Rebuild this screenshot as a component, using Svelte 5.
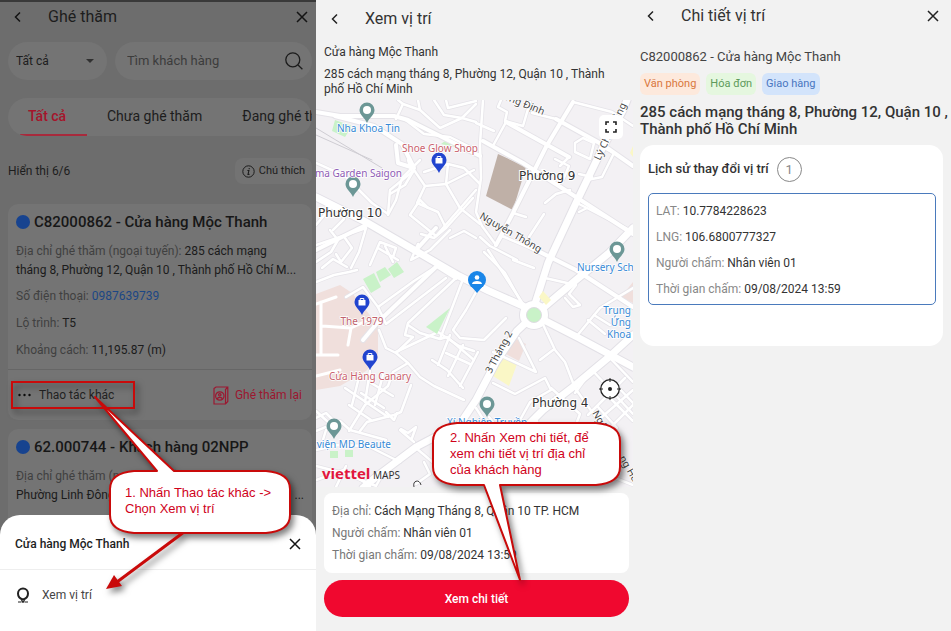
<script>
  const visitDetails = [
    { label: 'Số điện thoại', value: '0987639739', phone: true },
    { label: 'Lộ trình', value: 'T5' },
    { label: 'Khoảng cách', value: '11,195.87 (m)' }
  ];
  const placement = [
    { label: 'Địa chỉ', value: 'Cách Mạng Tháng 8, Quận 10 TP. HCM' },
    { label: 'Người chấm', value: 'Nhân viên 01' },
    { label: 'Thời gian chấm', value: '09/08/2024 13:59' }
  ];
  const history = [
    { label: 'LAT', value: '10.7784228623' },
    { label: 'LNG', value: '106.6800777327' },
    { label: 'Người chấm', value: 'Nhân viên 01' },
    { label: 'Thời gian chấm', value: '09/08/2024 13:59' }
  ];

  const lanes = [
    'M316 163L345 176L372 203', 'M316 245L340 237L366 228', 'M366 228L359 252L351 268', 'M316 262L331 252L338 240L330 230',
    'M316 282L334 275L349 272L357 270', 'M333 230L344 219L341 208', 'M345 238L352 248L341 262L336 254', 'M322 268L333 259L347 267',
    'M316 225L327 212L333 205', 'M372 203L388 214L390 190L412 172L408 160', 'M388 215L396 200L402 178L420 160',
    'M403 118L424 134L450 137L476 150', 'M396 119L403 104L398 100', 'M403 104L420 110L418 100', 'M420 110L440 128L462 118L476 122',
    'M434 100L444 115L462 118L476 104', 'M446 100L448 108L476 101', 'M414 170L425 186L417 203L438 212L446 228L434 238L421 234',
    'M414 170L405 185L390 194', 'M424 172L448 164L464 168L480 184', 'M448 164L446 184L460 208L480 224', 'M425 186L446 184L474 170',
    'M410 215L436 236L476 190', 'M410 215L420 200L428 208', 'M446 228L473 198', 'M450 238L464 231L476 238', 'M418 244L411 260L430 250L450 230',
    'M370 265L380 242L396 248L393 257M378 248L398 260M385 246L393 262', 'M437 266L414 281L378 307L386 324L446 278', 'M378 307L363 287L346 297',
    'M456 278L408 323L405 335L413 337', 'M408 325L420 333L440 339L452 308L463 279', 'M476 292L466 310L453 330L460 338L484 340L506 318',
    'M413 337L396 353L386 348L379 330', 'M396 353L408 363L420 377L434 386L464 400', 'M396 352L438 332L459 346L474 351',
    'M440 339L447 337L474 360', 'M432 360L447 370L463 388', 'M450 335L438 365M463 345L448 376M478 352L460 386M446 353L470 364',
    'M408 363L393 372L388 386L365 405L349 431', 'M371 383L393 396M361 393L384 408M349 405L371 420M358 381L352 405M370 371L365 402M383 375L375 405M345 388L388 417',
    'M316 431L340 421L350 430L386 440', 'M316 450L338 445L368 446L400 462', 'M360 431L367 422L394 415L401 412L411 385', 'M386 412L394 420L397 413',
    'M401 429L408 433L416 427L412 438M400 430L414 442', 'M316 411L328 422M316 418L326 413L334 421', 'M322 443L326 430', 'M356 478L376 486L386 468',
    'M316 466L355 476L370 486M316 480L344 470M336 487L346 466', 'M416 448L442 470L460 460', 'M424 462L430 474L416 484',
    'M483 100L480 144L481 178L476 212L482 226L496 245', 'M476 123L494 131', 'M501 100L498 107L507 112L505 121L523 126L530 102',
    'M506 122L569 157L560 166M555 159L569 166L563 180', 'M506 122L494 144', 'M556 119L532 113', 'M575 143L583 138L594 143L590 159L575 152Z',
    'M573 102L612 112L633 126', 'M579 174L592 177M587 180L602 177L614 153L602 147', 'M545 203L556 194L570 190', 'M544 214L529 237',
    'M513 213L526 217', 'M496 245L502 236L530 248L552 258', 'M480 237L490 246L517 260', 'M484 252L505 273L520 300', 'M513 260L534 268',
    'M488 250L523 304', 'M575 202L587 208L579 212M587 208L633 232', 'M545 278L576 285L569 294L580 305L573 307L565 298',
    'M540 318L555 350L565 362L575 388L612 440', 'M540 360L553 350', 'M519 338L536 372L493 352', 'M493 383L515 394L545 378L551 390L530 402L520 420',
    'M576 337L600 308L633 288', 'M588 320L605 334M594 315L610 325', 'M575 393L592 370L609 357L633 382', 'M592 370L633 414',
    'M588 415L625 378M595 423L633 390M604 434L633 405M598 407L617 428M608 396L633 421M617 386L633 403', 'M545 408L522 434L502 440L478 421',
    'M489 417L510 443L545 456', 'M551 388L580 414L570 440L595 470L633 485', 'M560 399L535 415L541 434', 'M476 408L490 430L474 450'
  ];
  const streets = [
    'M316 112L340 116L394 116L408 120L470 151L480 156', 'M335 116L374 126L402 144L414 168L398 163L396 145', 'M316 250L366 225',
    'M483 141L523 163L576 197L633 234', 'M506 122L569 157', 'M573 102L546 147L513 213L496 245', 'M556 119L603 145L633 166', 'M530 247L576 270L633 307',
    'M416 250L436 228', 'M437 266L456 278', 'M363 340L378 322L437 266'
  ];
  const avenues = [
    'M316 197L366 222L416 251L459 276L489 291L523 306L534 315L579 338L633 367', 'M627 100L623 110L603 147L576 203L548 263L534 307',
    'M534 315L517 331L496 362L476 400L460 424L416 447L376 477L363 488', 'M537 313L576 280L609 253L633 228', 'M633 335L609 357L573 387L543 410L510 443'
  ];
  const places = [
    { x: 367, y: 123 }, { x: 353, y: 197 }, { x: 617, y: 262 }, { x: 487, y: 417 }, { x: 334, y: 439 }
  ];
  const shops = [{ x: 439, y: 173 }, { x: 362, y: 315 }, { x: 370, y: 370 }];
</script>

{#snippet back()}
  <svg width="12" height="14" viewBox="0 0 12 14"><path d="M8 2.5L3.5 7L8 11.5" fill="none" stroke="currentColor" stroke-width="1.5" /></svg>
{/snippet}
{#snippet cross()}
  <svg width="12" height="12" viewBox="0 0 12 12"><path d="M1 1L11 11M11 1L1 11" fill="none" stroke="currentColor" stroke-width="1.5" /></svg>
{/snippet}

<main>
  <section class="panel visits">
    <header>
      <button class="icon" aria-label="Quay lại">{@render back()}</button>
      <h1>Ghé thăm</h1>
      <button class="icon" aria-label="Đóng">{@render cross()}</button>
    </header>

    <div class="filters">
      <div class="pill choose">
        <select aria-label="Trạng thái"><option>Tất cả</option></select>
        <svg width="8" height="4" viewBox="0 0 8 4"><path d="M0 0H8L4 4Z" fill="#303030" /></svg>
      </div>
      <div class="pill search">
        <input type="search" placeholder="Tìm khách hàng" aria-label="Tìm khách hàng" />
        <svg width="18" height="18" viewBox="0 0 18 18" fill="none" stroke="#1c1c1c" stroke-width="1.3"><circle cx="7.8" cy="7.8" r="7" /><path d="M13 13L17.4 17.2" /></svg>
      </div>
    </div>

    <div class="tabs" role="tablist">
      <button role="tab" aria-selected="true" class="on">Tất cả</button>
      <button role="tab" aria-selected="false">Chưa ghé thăm</button>
      <button role="tab" aria-selected="false">Đang ghé thăm</button>
    </div>

    <div class="count">
      <span>Hiển thị 6/6</span>
      <button>
        <svg width="13" height="13" viewBox="0 0 13 13"><circle cx="6.5" cy="6.5" r="5.7" fill="none" stroke="#1c1c1c" /><path d="M7.2 3V4.3M5.4 5.5H6.9L6 9.4H7.5" fill="none" stroke="#1c1c1c" stroke-width="1.1" /></svg>
        Chú thích
      </button>
    </div>

    <article class="visit">
      <h2><i></i>C82000862 - Cửa hàng Mộc Thanh</h2>
      <p class="address">Địa chỉ ghé thăm (ngoại tuyến): <b>285 cách mạng<br />tháng 8, Phường 12, Quận 10 , Thành phố Hồ Chí M...</b></p>
      {#each visitDetails as d}
        <p>{d.label}: {#if d.phone}<a href="tel:{d.value}">{d.value}</a>{:else}<b>{d.value}</b>{/if}</p>
      {/each}
      <footer>
        <button class="more">
          <svg width="13" height="4" viewBox="0 0 13 4"><circle cx="1.5" cy="2" r="1.2" /><circle cx="6.5" cy="2" r="1.2" /><circle cx="11.5" cy="2" r="1.2" /></svg>
          Thao tác khác
        </button>
        <button class="again">
          <svg width="16" height="19" viewBox="0 0 16 19" fill="none" stroke="currentColor" stroke-width="1.2"><path d="M1 2.5L3 1H14.800V15.500L12.500 18H1Z M12.500 18V3.500L14.800 1" /><circle cx="6.800" cy="10" r="4.200" /><circle cx="6.800" cy="8.800" r="1.2" /><path d="M4.500 13C4.500 10.800 9.100 10.800 9.100 13" /></svg>
          Ghé thăm lại
        </button>
      </footer>
    </article>

    <article class="visit">
      <h2><i></i>62.000744 - Khách hàng 02NPP</h2>
      <p class="address">Địa chỉ ghé thăm (ngoại tuyến):<br /><b class="cut"><span>Phường Linh Đông</span><span>...</span></b></p>
    </article>

    <div class="sheet">
      <div class="sheet-head">
        <h2>Cửa hàng Mộc Thanh</h2>
        <button class="icon" aria-label="Đóng">{@render cross()}</button>
      </div>
      <button class="option">
        <svg width="14" height="16" viewBox="0 0 14 16" fill="none" stroke="#222" stroke-width="2"><path d="M7 12.500C3.500 11.500 2 9 2 6.500A5 5 0 0 1 12 6.500C12 9 10.500 11.500 7 12.500Z" /><path d="M2 15H5.500M8.500 15H12M5.500 13L7 15.500L8.500 13" stroke-width="1.200" /></svg>
        Xem vị trí
      </button>
    </div>

    <svg class="marks" width="316" height="631" viewBox="0 0 316 631">
      <g class="shade" fill="none" stroke="#c90a0a" stroke-width="2">
        <rect x="12" y="382" width="122" height="26" />
        <path d="M184 532L113 585" stroke-width="3" />
        <path d="M106 589L114 575L122 586Z" fill="#c90a0a" stroke="none" />
        <path d="M95 397L174 471H266Q290 473 290 489V515Q290 531 266 533H134Q110 531 110 515V489Q110 473 134 471H157Z" fill="#fff" stroke-linejoin="round" />
      </g>
    </svg>
    <p class="note first">1. Nhấn Thao tác khác -&gt;<br />Chọn Xem vị trí</p>
  </section>

  <section class="panel place">
    <header>
      <button class="icon" aria-label="Quay lại">{@render back()}</button>
      <h1>Xem vị trí</h1>
    </header>
    <p class="name">Cửa hàng Mộc Thanh</p>
    <p class="street">285 cách mạng tháng 8, Phường 12, Quận 10 , Thành phố Hồ Chí Minh</p>

    <div class="map">
      <svg viewBox="316 100 317 387" preserveAspectRatio="xMidYMid slice" role="img" aria-label="Bản đồ">
        <rect x="316" y="100" width="317" height="387" fill="#f3f1f4" />
        <g fill="#f0dfdc">
          <path d="M316 294L340 285L352 293L378 325L378 358L366 371L340 386L316 390Z" />
          <path d="M512 337L526 344L519 361L504 353Z" /><path d="M633 282L621 297L633 303Z" />
        </g>
        <path d="M498 154L526 167L513 210L486 196Z" fill="#bfb0a7" />
        <g fill="#c9f2c8">
          <path d="M335 120L352 126L345 137L332 131ZM441 144L449 138L454 147ZM363 279L374 273L381 287L371 293ZM376 272L385 267L391 275L380 282ZM388 269L397 262L404 272L394 278ZM330 451H338V458H330ZM345 450H353V457H345Z" />
        </g>
        <path d="M500 357L517 364L509 386L493 376ZM633 146L630 153L633 157Z" fill="#faf7c6" />
        <g fill="none" stroke-linecap="round" stroke-linejoin="round">
          {#each lanes as d}<path {d} stroke="#e5e3e8" stroke-width="4" />{/each}
          {#each streets as d}<path {d} stroke="#e5e3e8" stroke-width="6" />{/each}
          {#each avenues as d}<path {d} stroke="#e2e0e6" stroke-width="9" />{/each}
          <circle cx="534" cy="315" r="15" stroke="none" fill="#e2e0e6" />
          {#each lanes as d}<path {d} stroke="#fff" stroke-width="2.500" />{/each}
          {#each streets as d}<path {d} stroke="#fff" stroke-width="4" />{/each}
          {#each avenues as d}<path {d} stroke="#fff" stroke-width="7" />{/each}
          <path d="M316 304L336 297M321 302V355M322 326L351 328L368 320M351 328L348 345M316 355H338M316 376L340 370" stroke="#fff" stroke-width="3" />
          <path d="M316 128L382 168M316 135L372 160" stroke="#cfcdd3" stroke-width="1" />
        </g>
        <path d="M426 327L450 308L437 334Z" fill="#c9f2c8" />
        <path d="M539 297L543 291L551 300L546 305Z" fill="#faf7c6" />
        <circle cx="534" cy="315" r="14" fill="#fff" /><circle cx="534" cy="315" r="7.500" fill="#c9f2c8" stroke="#dedce2" />
        {#each places as p}
          <g transform="translate({p.x} {p.y})"><path d="M0 0C-2-5-7.500-8-7.500-13A7.500 7.500 0 0 1 7.500-13C7.500-8 2-5 0 0Z" fill="#6c9796" /><circle cy="-13" r="4" fill="#fff" /></g>
        {/each}
        {#each shops as p}
          <g transform="translate({p.x} {p.y})"><path d="M0 0C-2-5-7.500-8-7.500-13A7.500 7.500 0 0 1 7.500-13C7.500-8 2-5 0 0Z" fill="#2144cf" /><path d="M-3.500-15H3.500V-9.500H-3.500Z" fill="#fff" /><path d="M-1.800-14V-16.500H1.800V-14" fill="none" stroke="#fff" /></g>
        {/each}
        <g class="label">
          <text x="337" y="132" fill="#3689d6">Nha Khoa Tin</text>
          <text x="402" y="152" fill="#c9606c">Shoe Glow Shop</text>
          <text x="402" y="177" text-anchor="end" fill="#8e5bb5">rma Garden Saigon</text>
          <text x="577" y="271" fill="#3689d6">Nursery Sch</text>
          <text x="631" y="314" text-anchor="end" fill="#3689d6">Trung</text>
          <text x="631" y="326" text-anchor="end" fill="#3689d6">Ứng</text>
          <text x="631" y="338" text-anchor="end" fill="#3689d6">Khoa</text>
          <text x="362" y="325" text-anchor="middle" fill="#c0606c">The 1979</text>
          <text x="370" y="380" text-anchor="middle" fill="#c9606c">Cửa Hàng Canary</text>
          <text x="391" y="448" text-anchor="end" fill="#3689d6">ỹ viện MD Beaute</text>
          <text x="487" y="426" text-anchor="middle" fill="#3689d6">Xí Nghiệp Truyền</text>
        </g>
        <g class="label road">
          <text transform="translate(543 115) rotate(22)" text-anchor="end">ương Định</text>
          <text transform="translate(479 218) rotate(30)">Nguyễn Thông</text>
          <text transform="translate(600 161) rotate(-65)">Lý Ch</text>
          <text transform="translate(619 121) rotate(-65)">ắng</text>
          <text transform="translate(491 374) rotate(-62)">3 Tháng 2</text>
          <text transform="translate(592 413) rotate(60)">Ngô</text>
          <text transform="translate(619 458) rotate(60)">ng Hu</text>
        </g>
        <g class="ward">
          <text x="519" y="180">Phường 9</text>
          <text x="318" y="217">Phường 10</text>
          <text x="532" y="407">Phường 4</text>
        </g>
        <path d="M414 487C412 480 420 479 421 485" fill="none" stroke="#444" />
        <path d="M477 293L471 286H483Z" fill="#1a86e8" /><circle cx="477" cy="280" r="9" fill="#1a86e8" />
        <circle cx="477" cy="277.500" r="2.300" fill="#fff" /><path d="M472 284C472 280 482 280 482 284Z" fill="#fff" />
        <text x="322" y="479" class="brand">viettel</text>
        <text x="373" y="479" class="maps">MAPS</text>
      </svg>
      <button class="full" aria-label="Toàn màn hình"><svg width="12" height="12" viewBox="0 0 12 12"><path d="M1 4V1H4M8 1H11V4M11 8V11H8M4 11H1V8" fill="none" stroke="#222" stroke-width="1.600" /></svg></button>
      <button class="locate" aria-label="Vị trí của tôi"><svg width="22" height="22" viewBox="0 0 22 22"><circle cx="11" cy="11" r="9.300" fill="#fff" stroke="#222" stroke-width="1.300" /><circle cx="11" cy="11" r="2" fill="#222" /><path d="M11 0V4M11 18V22M0 11H4M18 11H22" stroke="#222" /></svg></button>
    </div>

    <div class="info">
      {#each placement as d}<p>{d.label}: <b>{d.value}</b></p>{/each}
    </div>
    <button class="primary">Xem chi tiết</button>

    <svg class="marks" width="317" height="631" viewBox="316 0 317 631">
      <path class="shade" d="M520 580L500 485H596Q620 483 620 467V441Q620 425 596 423H457Q433 425 433 441V467Q433 483 457 485H484Z" fill="#fff" stroke="#c90a0a" stroke-width="2" stroke-linejoin="round" />
    </svg>
    <p class="note second">2. Nhấn Xem chi tiết, để<br />xem chi tiết vị trí địa chỉ<br />của khách hàng</p>
  </section>

  <section class="panel detail">
    <header>
      <button class="icon" aria-label="Quay lại">{@render back()}</button>
      <h1>Chi tiết vị trí</h1>
      <button class="icon" aria-label="Đóng">{@render cross()}</button>
    </header>
    <p class="code">C82000862 - Cửa hàng Mộc Thanh</p>
    <div class="tags"><span class="office">Văn phòng</span><span class="bill">Hóa đơn</span><span class="ship">Giao hàng</span></div>
    <h2 class="where">285 cách mạng tháng 8, Phường 12, Quận 10 , Thành phố Hồ Chí Minh</h2>
    <div class="history">
      <h3>Lịch sử thay đổi vị trí <span>1</span></h3>
      <div class="entry">
        {#each history as d}<p>{d.label}: <b>{d.value}</b></p>{/each}
      </div>
    </div>
  </section>
</main>

<style>
  :global(body) { margin: 0; background: #f2f2f2; }
  main { display: grid; grid-template-columns: 316fr 318fr 317fr; min-height: 100vh; font: 12px/18px Roboto, "Noto Sans", sans-serif; color: #333; }
  .panel { position: relative; min-width: 0; box-sizing: border-box; overflow: hidden; display: flex; flex-direction: column; }
  p, h1, h2, h3 { margin: 0; font-weight: 400; }
  b { font-weight: 400; color: #333; }
  button { font: inherit; color: inherit; border: 0; padding: 0; background: none; display: flex; align-items: center; cursor: pointer; }
  svg { display: block; flex: none; }
  header { display: flex; align-items: center; gap: 24px; height: 32px; padding: 0 8px 0 13px; }
  header h1 { flex: 1; font-size: 16px; line-height: 20px; }
  .icon { color: #222; }

  .visits { background: #6d6d6d; border-top: 2px solid #393939; color: #1d1d1d; padding: 0 4px 0 8px; }
  .visits header { padding: 0 4px; height: 30px; }
  .visits b { color: #1b1b1b; }
  .visits .icon { color: #141414; }
  .filters { display: flex; gap: 8px; margin-top: 10px; }
  .pill { display: flex; align-items: center; height: 38px; border-radius: 19px; background: #747474; box-sizing: border-box; }
  .choose { width: 99px; padding: 0 13px 0 8px; }
  .choose select { flex: 1; min-width: 0; appearance: none; border: 0; padding: 0; background: none; font: inherit; color: inherit; }
  .search { flex: 1; min-width: 0; padding: 0 9px 0 12px; }
  .search input { flex: 1; min-width: 0; border: 0; padding: 0; background: none; font: inherit; font-size: 13px; }
  .search input::placeholder { color: #3c3c3c; opacity: 1; }
  .tabs { display: flex; gap: 40px; height: 38px; margin-top: 18px; padding-left: 12px; border-radius: 19px; background: #747474; overflow: hidden; font-size: 14px; }
  .tabs button { flex: none; border-bottom: 2px solid transparent; }
  .tabs .on { width: 67px; padding-left: 8px; margin-right: -20px; box-sizing: border-box; color: #a5142b; border-color: #a82a3c; font-weight: 500; }
  .count { display: flex; justify-content: space-between; align-items: center; margin-top: 22px; height: 26px; }
  .count button { gap: 4px; height: 26px; padding: 0 7px; border-radius: 8px; background: #737373; font-size: 11px; }
  .visit { margin-top: 20px; padding: 8px 8px 0; background: #747474; border-radius: 10px; color: #404040; }
  .visit + .visit { margin-top: 9px; flex: 1; }
  .visit h2 { display: flex; align-items: center; gap: 4px; font-size: 15px; line-height: 20px; font-weight: 500; color: #171717; white-space: nowrap; }
  .visit i { width: 14px; height: 14px; border-radius: 50%; background: #17438f; }
  .visit p { margin-top: 9px; white-space: nowrap; }
  .visit .address { line-height: 19px; margin-top: 10px; }
  .visit .address + p { margin-top: 7px; }
  .visit a { color: #1c4784; text-decoration: none; }
  .cut { display: flex; justify-content: space-between; }
  .visit footer { display: flex; justify-content: space-between; height: 50px; margin: 10px -8px 0; padding: 0 10px; border-top: 1px solid #666; }
  .more { gap: 8px; color: #222; }
  .more svg { fill: #0c0c0c; }
  .again { gap: 6px; color: #9c1730; }
  .sheet { position: absolute; left: 0; right: 0; bottom: 0; height: 116px; background: #fff; border-radius: 20px 20px 0 0; }
  .sheet-head { display: flex; align-items: center; justify-content: space-between; height: 50px; padding: 4px 15px 0; border-bottom: 1px solid #eee; }
  .sheet-head h2 { font-size: 12px; font-weight: 500; }
  .option { gap: 12px; padding: 16px; color: #444; line-height: 18px; }

  .marks { position: absolute; left: 0; top: 0; pointer-events: none; }
  .visits .marks { top: -2px; }
  .shade { filter: drop-shadow(3px 4px 3px rgb(0 0 0 / .5)); }
  .note { position: absolute; font: 13px/16px "Liberation Sans", Arial, sans-serif; color: #d0021b; white-space: nowrap; }
  .first { left: 125px; top: 483px; }
  .second { left: 134px; top: 430px; }

  .place header { height: 38px; }
  .name { margin: 5px 8px 0; }
  .street { margin: 6px 8px 3px; line-height: 15px; }
  .map { position: relative; height: 387px; margin-right: 1px; }
  .map > svg { width: 100%; height: 100%; }
  .label { font: 10px "Noto Sans", sans-serif; paint-order: stroke; stroke: #fff; stroke-width: 1.500px; }
  .road { fill: #444; }
  .ward { font: 12px "DejaVu Sans", sans-serif; fill: #333; paint-order: stroke; stroke: #fff; stroke-width: 2px; }
  .brand { font: 700 15px "Open Sans", sans-serif; fill: #e2163c; }
  .maps { font: 10px "Noto Sans", sans-serif; fill: #333; }
  .full { position: absolute; right: 10px; top: 15px; width: 24px; height: 24px; justify-content: center; background: #fff; border-radius: 5px; }
  .locate { position: absolute; right: 12px; top: 278px; }
  .info { margin: 6px 5px 7px 8px; padding: 7px 8px; background: #fff; border-radius: 8px; line-height: 22px; color: #777; }
  .primary { height: 37px; margin: 0 5px 0 8px; justify-content: center; border-radius: 19px; background: #f0082f; color: #fff; font-weight: 500; }

  .detail header { padding: 0 12px 0 11px; }
  .code { margin: 16px 6px 0; color: #444; font-size: 13px; }
  .tags { display: flex; gap: 6px; margin: 7px 6px 0; font-size: 11px; line-height: 22px; }
  .tags span { padding: 0 4px; border-radius: 6px; }
  .office { background: #fde9dc; color: #d9783c; }
  .bill { background: #e5f7df; color: #5d9a5b; }
  .ship { background: #d3e4fb; color: #4976c0; }
  .where { margin: 9px 0 7px 6px; font-size: 15px; line-height: 17px; font-weight: 500; color: #333; }
  .history { margin: 0 8px 0 6px; padding: 11px 7px 41px 8px; background: #fff; border-radius: 14px; }
  .history h3 { display: flex; align-items: center; gap: 8px; font-weight: 500; font-size: 13px; line-height: 26px; }
  .history h3 span { width: 23px; height: 23px; border: 1px solid #888; border-radius: 50%; text-align: center; line-height: 23px; font-weight: 400; color: #888; }
  .entry { display: grid; gap: 8px; margin-top: 11px; padding: 8px 7px 6px; border: 1px solid #4a7abc; border-radius: 5px; color: #888; }
</style>
